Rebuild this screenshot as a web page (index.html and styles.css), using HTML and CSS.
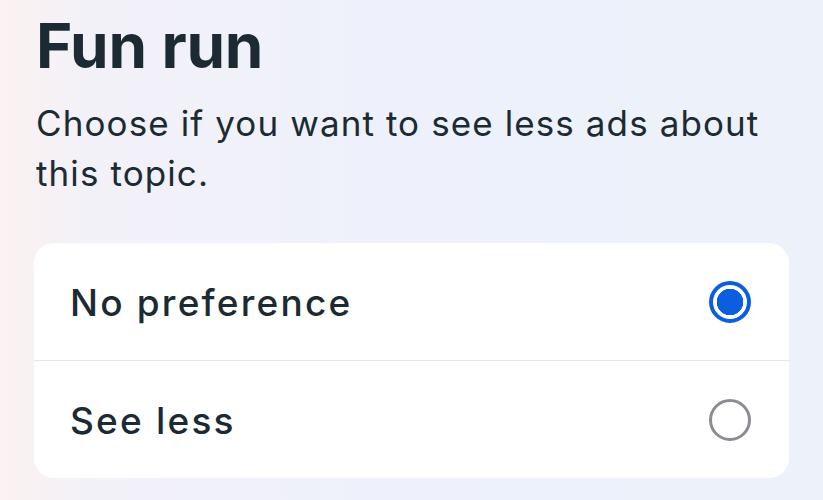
FILE: index.html
```html
<!DOCTYPE html>
<html lang="en">
<head>
<meta charset="utf-8">
<link rel="stylesheet" href="styles.css">
</head>
<body>
<main class="page">
  <h1 class="title">Fun run</h1>
  <p class="desc">Choose if you want to see less ads about this topic.</p>
  <div class="card">
    <div class="row">
      <span class="label">No preference</span>
      <span class="radio checked"></span>
    </div>
    <div class="row">
      <span class="label">See less</span>
      <span class="radio"></span>
    </div>
  </div>
</main>
</body>
</html>
```
FILE: styles.css
```css
html, body {
  margin: 0;
  height: 100%;
}
body {
  background: linear-gradient(90deg, #fbf2f1 0%, #f3f1f8 10%, #eef1fb 45%, #ecf1fa 100%);
  font-family: Inter, "Noto Sans", sans-serif;
  color: #1c2b33;
  overflow: hidden;
}
.page {
  padding: 6px 34px 0 34px;
}
.title {
  margin: 0 0 0 2px;
  font-size: 62px;
  font-weight: 700;
  line-height: 80px;
  letter-spacing: -0.2px;
}
.desc {
  margin: 12px 20px 0 2px;
  font-size: 35px;
  line-height: 50px;
  font-weight: 400;
  letter-spacing: 1.1px;
}
.card {
  margin-top: 45px;
  background: #fff;
  border-radius: 20px;
  width: 755px;
  overflow: hidden;
}
.row {
  height: 117px;
  display: flex;
  align-items: center;
  justify-content: space-between;
  padding: 0 38px 0 36px;
}
.row + .row {
  border-top: 1px solid #e4e6eb;
}
.label {
  font-size: 37px;
  font-weight: 500;
  letter-spacing: 2.2px;
  padding-top: 1px;
}
.radio {
  width: 42px;
  height: 42px;
  box-sizing: border-box;
  border-radius: 50%;
  border: 3px solid #8a8d91;
}
.radio.checked {
  border: 4px solid #0b5fde;
  background: radial-gradient(circle, #0b5fde 0 13px, #fff 13.5px);
}
```
